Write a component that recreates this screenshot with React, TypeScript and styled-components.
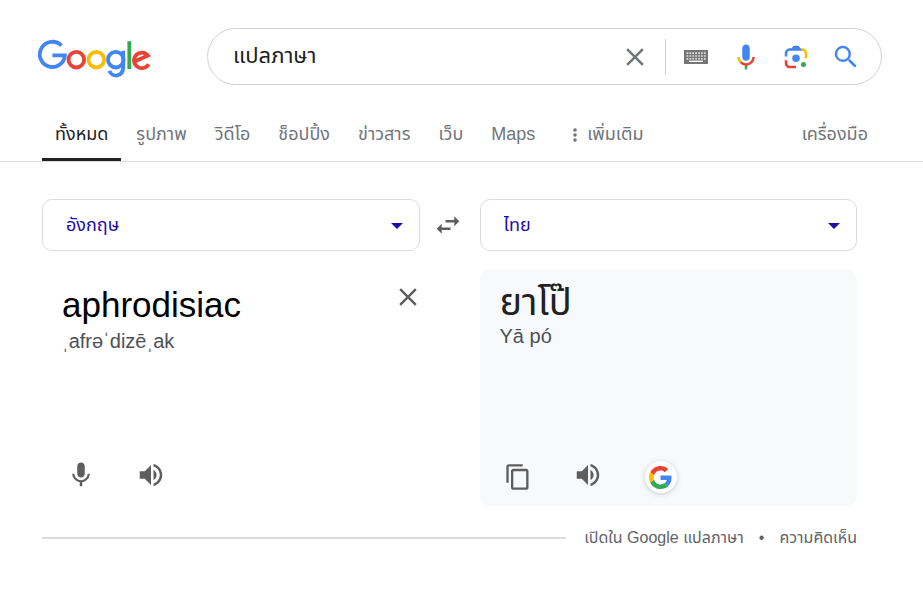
import React, { useState } from "react";
import styled, { createGlobalStyle } from "styled-components";

const sans = `"Liberation Sans", Arial, "Noto Sans Thai", "DejaVu Sans", sans-serif`;

const GlobalStyle = createGlobalStyle`
  *, *::before, *::after { box-sizing: border-box; }
  body { margin: 0; background: #fff; color: #202124; font-family: ${sans}; }
  button, input, select, textarea { font-family: inherit; }
`;

const Header = styled.header`
  display: flex;
  align-items: center;
  gap: 55px;
  padding: 28px 41px 0 37px;
`;

const LogoLink = styled.a`
  display: block;
  flex: none;
  height: 39px;
  margin-top: 4px;
`;

const SearchBar = styled.form`
  flex: 1;
  min-width: 0;
  height: 57px;
  display: flex;
  align-items: center;
  padding: 0 20px 0 25px;
  border: 1px solid #d0d2d6;
  border-radius: 29px;
`;

const SearchInput = styled.input`
  flex: 1;
  min-width: 0;
  height: 40px;
  padding: 0;
  border: 0;
  outline: 0;
  background: none;
  color: #202124;
  font-size: 22px;
`;

const IconButton = styled.button<{ $tone?: string }>`
  flex: none;
  display: flex;
  align-items: center;
  justify-content: center;
  width: 30px;
  height: 30px;
  padding: 0;
  border: 0;
  background: none;
  color: ${(p) => p.$tone ?? "#5e5e5e"};
  cursor: pointer;

  svg {
    flex: none;
  }
`;

const ClearButton = styled(IconButton)`
  width: 24px;
`;

const Divider = styled.span`
  width: 1px;
  height: 36px;
  margin: 0 15px;
  background: #d0d2d6;
`;

const SearchTools = styled.div`
  display: flex;
  gap: 20px;
`;

const TabBar = styled.nav`
  display: flex;
  justify-content: space-between;
  margin-top: 26px;
  padding: 0 55px 0 42px;
  border-bottom: 1px solid #dadce0;
`;

const TabList = styled.div`
  display: flex;
  gap: 2px;
`;

const Tab = styled.a<{ $active?: boolean }>`
  display: flex;
  align-items: center;
  height: 50px;
  padding: 0 13px;
  border-bottom: 3px solid ${(p) => (p.$active ? "#202124" : "transparent")};
  color: ${(p) => (p.$active ? "#202124" : "#70757a")};
  font-size: 18px;
  text-decoration: none;
  white-space: nowrap;
`;

const MoreTab = styled(Tab).attrs({ as: "button" })`
  gap: 10px;
  margin-left: 10px;
  border-width: 0 0 3px;
  background: none;
`;

const ToolsTab = styled(Tab).attrs({ as: "button" })`
  padding: 0;
  border-width: 0 0 3px;
  background: none;
`;

const Translator = styled.main`
  padding: 37px 66px 0 42px;
`;

const Columns = styled.div`
  display: grid;
  grid-template-columns: minmax(0, 1fr) 60px minmax(0, 1fr);
  row-gap: 18px;
`;

const SelectBox = styled.label`
  display: flex;
  align-items: center;
  height: 52px;
  padding: 0 16px 0 23px;
  border: 1px solid #dadce0;
  border-radius: 10px;
  color: #1a0dab;
`;

const LanguageSelect = styled.select`
  flex: 1;
  height: 40px;
  padding: 0;
  border: 0;
  outline: 0;
  appearance: none;
  background: none;
  color: inherit;
  font-size: 18px;
`;

const SwapCell = styled.div`
  display: flex;
  align-items: center;
  justify-content: center;
  padding-right: 4px;
`;

const Panel = styled.section<{ $filled?: boolean }>`
  display: flex;
  flex-direction: column;
  height: 237px;
  padding: 13px 20px 12px;
  border-radius: 10px;
  background: ${(p) => (p.$filled ? "#f8f9fa" : "transparent")};
`;

const SourcePanel = styled(Panel)`
  padding: 13px 0 14px 20px;
`;

const SourceRow = styled.div`
  display: flex;
  align-items: flex-start;
`;

const SourceText = styled.textarea`
  flex: 1;
  min-width: 0;
  height: 45px;
  padding: 1px 0 0;
  border: 0;
  outline: 0;
  resize: none;
  overflow: hidden;
  background: none;
  color: #000;
  font-size: 35px;
  line-height: 44px;
`;

const TargetText = styled.p`
  height: 40px;
  margin: 0;
  font-size: 38px;
  line-height: 40px;
`;

const Phonetic = styled.p`
  margin: 0;
  color: #4d5156;
  font-size: 20px;
  line-height: 28px;
`;

const Actions = styled.div`
  display: flex;
  align-items: center;
  gap: 40px;
  height: 34px;
  margin-top: auto;
`;

const SourceActions = styled(Actions)`
  padding-left: 4px;
`;

const TargetActions = styled(Actions)`
  padding-left: 3px;
`;

const ListenButton = styled(IconButton)`
  align-self: flex-start;
`;

const GoogleButton = styled(IconButton)`
  width: 32px;
  height: 32px;
  margin-left: 2px;
  border-radius: 50%;
  background: #fff;
  box-shadow: 0 1px 5px rgba(60, 64, 67, 0.25);
`;

const Footer = styled.footer`
  display: flex;
  align-items: center;
  gap: 18px;
  margin-top: 20px;
  color: #5f6368;
  font-size: 16px;
  line-height: 24px;
`;

const Rule = styled.hr`
  flex: 1;
  height: 2px;
  margin: 0;
  border: 0;
  background: #dadce0;
`;

const FooterLinks = styled.div`
  display: flex;
  gap: 15px;
`;

const FooterLink = styled.a`
  color: inherit;
  text-decoration: none;
  white-space: nowrap;
`;

const Logo = () => (
  <svg width="115" height="39" viewBox="37 39 115 39" fill="none" strokeWidth="3.8" aria-hidden="true">
    <path d="M61.4 45.6A12.6 12.6 0 1 0 64.9 55.3H52.4" stroke="#4285f4" />
    <circle cx="76.3" cy="59.7" r="7.8" stroke="#ea4335" />
    <circle cx="96.3" cy="59.7" r="7.8" stroke="#fbbc05" />
    <circle cx="115.8" cy="59.7" r="7.8" stroke="#4285f4" />
    <path d="M123.2 50.8V66.8C123.2 77.4 112 77.8 109.4 70.8" stroke="#4285f4" />
    <path d="M129.3 41.2V69" stroke="#34a853" />
    <path d="M148.6 64.2A7.8 7.8 0 1 1 148 55.6L135.2 61.2" stroke="#ea4335" />
  </svg>
);

const Glyph = ({ d, size = 30 }: { d: string; size?: number }) => (
  <svg width={size} height={size} viewBox="0 0 24 24" fill="currentColor" aria-hidden="true">
    <path d={d} />
  </svg>
);

const shapes = {
  close: "M19 6.41L17.59 5 12 10.59 6.41 5 5 6.41 10.59 12 5 17.59 6.41 19 12 13.41 17.59 19 19 17.59 13.41 12z",
  search:
    "M15.5 14h-.79l-.28-.27A6.471 6.471 0 0 0 16 9.5 6.5 6.5 0 1 0 9.5 16c1.61 0 3.09-.59 4.23-1.57l.27.28v.79l5 4.99L20.49 19l-4.99-5zm-6 0C7.01 14 5 11.99 5 9.5S7.01 5 9.5 5 14 7.01 14 9.5 11.99 14 9.5 14z",
  mic: "M12 14c1.66 0 2.99-1.34 2.99-3L15 5c0-1.66-1.34-3-3-3S9 3.34 9 5v6c0 1.66 1.34 3 3 3zm5.3-3c0 3-2.54 5.1-5.3 5.1S6.7 14 6.7 11H5c0 3.41 2.72 6.23 6 6.72V21h2v-3.28c3.28-.48 6-3.3 6-6.72h-1.7z",
  speaker:
    "M3 9v6h4l5 5V4L7 9H3zm13.5 3c0-1.77-1.02-3.29-2.5-4.03v8.05c1.48-.73 2.5-2.25 2.5-4.02zM14 3.23v2.06c2.89.86 5 3.54 5 6.71s-2.11 5.85-5 6.71v2.06c4.01-.91 7-4.49 7-8.77s-2.99-7.86-7-8.77z",
  copy: "M16 1H4c-1.1 0-2 .9-2 2v14h2V3h12V1zm3 4H8c-1.1 0-2 .9-2 2v14c0 1.1.9 2 2 2h11c1.1 0 2-.9 2-2V7c0-1.1-.9-2-2-2zm0 16H8V7h11v14z",
  swap: "M6.99 11L3 15l3.99 4v-3H14v-2H6.99v-3zM21 9l-3.99-4v3H10v2h7.01v3L21 9z",
};

const Keyboard = () => (
  <svg width="24" height="14" viewBox="0 0 24 14" aria-hidden="true">
    <rect width="24" height="14" fill="#757575" />
    <path d="M2.5 3.2H22M2.5 6H22M2.5 8.8H22" stroke="#fff" strokeWidth="1.7" strokeDasharray="1.8 1.1" opacity=".75" />
    <rect x="4.5" y="9.7" width="15" height="3" fill="#757575" />
    <path d="M5 11.3H19" stroke="#fff" strokeWidth="1.4" />
  </svg>
);

const VoiceSearch = () => (
  <svg width="30" height="30" viewBox="0 0 24 24" aria-hidden="true">
    <path fill="#4285f4" d="M12 15c1.66 0 3-1.31 3-2.97V5.01C15 3.35 13.66 2 12 2S9 3.34 9 5.01v7.02C9 13.69 10.34 15 12 15z" />
    <path fill="#34a853" d="M11 18.08h2V22h-2z" />
    <path fill="#fbbc05" d="M7.05 16.87C5.78 15.54 5 14.04 5 12h2c0 1.45.56 2.42 1.47 3.38v.32l-1.15 1.18z" />
    <path fill="#ea4335" d="M12 16.93a4.97 5.25 0 0 1-3.54-1.55l-1.41 1.49C8.31 18.21 10.07 19 12 19c3.87 0 6.99-2.92 6.99-7H17c0 2.92-2.24 4.93-5 4.93z" />
  </svg>
);

const Lens = () => (
  <svg width="30" height="30" viewBox="0 0 192 192" aria-hidden="true">
    <circle fill="#34a853" cx="144" cy="144" r="16" />
    <circle fill="#4285f4" cx="96" cy="104" r="24" />
    <path fill="#ea4335" d="M24 135.2C24 153.3 38.7 168 56.8 168H96v-16l-40.1-.1C47.1 151.9 40 143.7 40 134v-18H24z" />
    <path fill="#fbbc04" d="M168 72.8C168 54.7 153.3 40 135.2 40H116l20 16c8.8 0 15.9 8.3 15.9 18v30h16z" />
    <path fill="#4285f4" d="M112 24H80L68 40H56.8C38.7 40 24 54.7 24 72.8V92h16V74c0-9.7 7.1-18 15.9-18H136z" />
  </svg>
);

const Caret = () => (
  <svg width="12" height="8" viewBox="0 0 12 8" aria-hidden="true">
    <path d="M0 2h12L6 8z" fill="#1a0dab" />
  </svg>
);

const MoreDots = () => (
  <svg width="4" height="14" viewBox="0 0 4 14" fill="currentColor" aria-hidden="true">
    <circle cx="2" cy="2" r="1.8" />
    <circle cx="2" cy="7" r="1.8" />
    <circle cx="2" cy="12" r="1.8" />
  </svg>
);

const GoogleMark = () => (
  <svg width="23" height="23" viewBox="0 0 48 48" aria-hidden="true">
    <path fill="#EA4335" d="M24 9.5c3.54 0 6.71 1.22 9.21 3.6l6.85-6.85C35.9 2.38 30.47 0 24 0 14.62 0 6.51 5.38 2.56 13.22l7.98 6.19C12.43 13.72 17.74 9.5 24 9.5z" />
    <path fill="#4285F4" d="M46.98 24.55c0-1.57-.15-3.09-.38-4.55H24v9.02h12.94c-.58 2.96-2.26 5.48-4.78 7.18l7.73 6c4.51-4.18 7.09-10.36 7.09-17.65z" />
    <path fill="#FBBC05" d="M10.53 28.59A14.5 14.5 0 0 1 9.77 24c0-1.6.27-3.14.76-4.59l-7.98-6.19A23.93 23.93 0 0 0 0 24c0 3.88.92 7.54 2.56 10.78z" />
    <path fill="#34A853" d="M24 48c6.48 0 11.93-2.13 15.89-5.81l-7.73-6c-2.15 1.45-4.92 2.3-8.16 2.3-6.26 0-11.57-4.22-13.47-9.91l-7.98 6.19C6.51 42.62 14.62 48 24 48z" />
  </svg>
);

const tabs = ["ทั้งหมด", "รูปภาพ", "วิดีโอ", "ช็อปปิ้ง", "ข่าวสาร", "เว็บ", "Maps"];

export default function App() {
  const [query, setQuery] = useState("แปลภาษา");
  const [source, setSource] = useState("aphrodisiac");

  return (
    <>
      <GlobalStyle />
      <Header>
        <LogoLink href="#" aria-label="Google">
          <Logo />
        </LogoLink>
        <SearchBar role="search" onSubmit={(e) => e.preventDefault()}>
          <SearchInput aria-label="ค้นหา" value={query} onChange={(e) => setQuery(e.target.value)} />
          <IconButton type="button" aria-label="ล้าง" $tone="#70757a" onClick={() => setQuery("")}>
            <Glyph d={shapes.close} />
          </IconButton>
          <Divider />
          <SearchTools>
            <IconButton type="button" aria-label="แป้นพิมพ์">
              <Keyboard />
            </IconButton>
            <IconButton type="button" aria-label="ค้นหาด้วยเสียง">
              <VoiceSearch />
            </IconButton>
            <IconButton type="button" aria-label="ค้นหาด้วยภาพ">
              <Lens />
            </IconButton>
            <IconButton type="submit" aria-label="ค้นหา" $tone="#4285f4">
              <Glyph d={shapes.search} />
            </IconButton>
          </SearchTools>
        </SearchBar>
      </Header>

      <TabBar>
        <TabList>
          {tabs.map((name, i) => (
            <Tab key={name} href="#" $active={i === 0}>
              {name}
            </Tab>
          ))}
          <MoreTab>
            <MoreDots />
            เพิ่มเติม
          </MoreTab>
        </TabList>
        <ToolsTab>เครื่องมือ</ToolsTab>
      </TabBar>

      <Translator>
        <Columns>
          <SelectBox>
            <LanguageSelect aria-label="ภาษาต้นทาง" defaultValue="en">
              <option value="en">อังกฤษ</option>
            </LanguageSelect>
            <Caret />
          </SelectBox>
          <SwapCell>
            <IconButton type="button" aria-label="สลับภาษา">
              <Glyph d={shapes.swap} />
            </IconButton>
          </SwapCell>
          <SelectBox>
            <LanguageSelect aria-label="ภาษาปลายทาง" defaultValue="th">
              <option value="th">ไทย</option>
            </LanguageSelect>
            <Caret />
          </SelectBox>

          <SourcePanel>
            <SourceRow>
              <SourceText
                aria-label="ข้อความ"
                rows={1}
                spellCheck={false}
                value={source}
                onChange={(e) => setSource(e.target.value)}
              />
              <ClearButton type="button" aria-label="ล้างข้อความ" onClick={() => setSource("")}>
                <Glyph d={shapes.close} />
              </ClearButton>
            </SourceRow>
            <Phonetic>ˌafrəˈdizēˌak</Phonetic>
            <SourceActions>
              <IconButton type="button" aria-label="พูด">
                <Glyph d={shapes.mic} />
              </IconButton>
              <IconButton type="button" aria-label="ฟัง">
                <Glyph d={shapes.speaker} />
              </IconButton>
            </SourceActions>
          </SourcePanel>
          <span />
          <Panel $filled>
            <TargetText lang="th">ยาโป๊</TargetText>
            <Phonetic>Yā pó</Phonetic>
            <TargetActions>
              <IconButton type="button" aria-label="คัดลอก">
                <Glyph d={shapes.copy} size={28} />
              </IconButton>
              <ListenButton type="button" aria-label="ฟังคำแปล">
                <Glyph d={shapes.speaker} />
              </ListenButton>
              <GoogleButton type="button" aria-label="Google">
                <GoogleMark />
              </GoogleButton>
            </TargetActions>
          </Panel>
        </Columns>

        <Footer>
          <Rule />
          <FooterLinks>
            <FooterLink href="#">เปิดใน Google แปลภาษา</FooterLink>
            <span>•</span>
            <FooterLink href="#">ความคิดเห็น</FooterLink>
          </FooterLinks>
        </Footer>
      </Translator>
    </>
  );
}
